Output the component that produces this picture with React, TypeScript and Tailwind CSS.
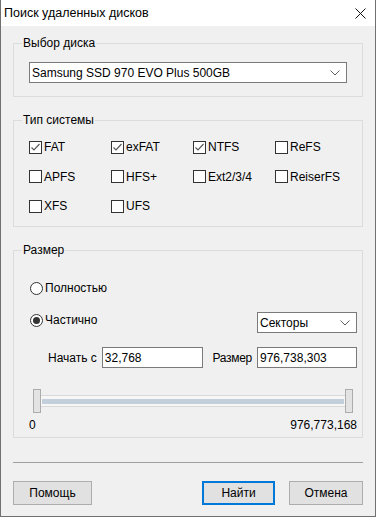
import React from 'react'

const Chevron = () => (
  <svg width="10" height="6" viewBox="0 0 10 6" className="shrink-0">
    <polyline points="0.5,0.5 5,5 9.5,0.5" fill="none" stroke="#606060" strokeWidth="1" />
  </svg>
)

function Checkbox({ label, checked }: { label: string; checked?: boolean }) {
  return (
    <div className="flex items-center gap-[2px] h-[20px]">
      <div className="w-[13px] h-[13px] border border-[#333333] bg-white flex items-center justify-center shrink-0">
        {checked && (
          <svg width="11" height="11" viewBox="0 0 11 11">
            <polyline points="1.5,5.5 4,8 9.5,2" fill="none" stroke="#5a5a5a" strokeWidth="1.2" />
          </svg>
        )}
      </div>
      <span>{label}</span>
    </div>
  )
}

function Radio({ label, checked }: { label: string; checked?: boolean }) {
  return (
    <div className="flex items-center gap-[2px] h-[14px]">
      <div className="w-[13px] h-[13px] rounded-full border border-[#333333] bg-white flex items-center justify-center shrink-0">
        {checked && <div className="w-[7px] h-[7px] rounded-full bg-[#333333]" />}
      </div>
      <span>{label}</span>
    </div>
  )
}

function Group({ title, children, className, inner }: { title: string; children: React.ReactNode; className?: string; inner?: string }) {
  return (
    <fieldset className={`min-w-0 border border-[#dcdcdc] ${className ?? ''}`}>
      <legend className="ml-[8px] px-[1px] leading-[14px]">{title}</legend>
      <div className={inner}>{children}</div>
    </fieldset>
  )
}

const fsList: [string, boolean][] = [
  ['FAT', true], ['exFAT', true], ['NTFS', true], ['ReFS', false],
  ['APFS', false], ['HFS+', false], ['Ext2/3/4', false], ['ReiserFS', false],
  ['XFS', false], ['UFS', false],
]

export default function App() {
  return (
    <div className="w-[376px] h-[517px] bg-[#f0f0f0] border-x border-b border-[#707070] text-[12px] leading-[14px] text-black font-['Liberation_Sans',Arial,sans-serif] overflow-hidden">
      {/* title bar */}
      <div className="h-[26px] bg-white flex items-center justify-between pl-[3px] pr-[9px]">
        <span className="text-[12.5px]">Поиск удаленных дисков</span>
        <svg width="11" height="11" viewBox="0 0 11 11">
          <path d="M0.5 0.5 L10.5 10.5 M10.5 0.5 L0.5 10.5" stroke="#111" strokeWidth="1" />
        </svg>
      </div>

      <div className="px-[12px] pt-[10px]">
        {/* disk */}
        <Group title="Выбор диска" inner="px-[15px] pb-[13px]">
          <div className="mt-[12px] h-[21px] border border-[#7a7a7a] bg-white flex items-center justify-between pl-[2px] pr-[6px]">
            <span>Samsung SSD 970 EVO Plus 500GB</span>
            <Chevron />
          </div>
        </Group>

        {/* fs types */}
        <Group title="Тип системы" className="mt-[16px]" inner="pl-[15px] pb-[10px]">
          <div className="mt-[10px] grid grid-cols-[82px_82px_82px_82px] gap-y-[9.5px]">
            {fsList.map(([name, checked]) => (
              <Checkbox key={name} label={name} checked={checked} />
            ))}
          </div>
        </Group>

        {/* size */}
        <Group title="Размер" className="mt-[16px]" inner="pl-[15px] pr-[5px] pb-[5px]">
          <div className="pt-[24px] pl-[1px]">
            <Radio label="Полностью" />
          </div>
          <div className="mt-[17px] flex items-start justify-between">
            <div className="pl-[1px] pt-[1px]">
              <Radio label="Частично" checked />
            </div>
            <div className="w-[100px] h-[21px] border border-[#7a7a7a] bg-white flex items-center justify-between pl-[2px] pr-[6px]">
              <span>Секторы</span>
              <Chevron />
            </div>
          </div>
          <div className="mt-[14px] flex items-center whitespace-nowrap">
            <span className="ml-[19px] shrink-0">Начать с</span>
            <div className="ml-[5px] w-[101px] shrink-0 h-[21px] border border-[#7a7a7a] bg-white flex items-center pl-[2px]">32,768</div>
            <span className="ml-auto shrink-0 tracking-[-0.3px]">Размер</span>
            <div className="ml-[5px] w-[100px] shrink-0 h-[21px] border border-[#7a7a7a] bg-white flex items-center pl-[2px]">976,738,303</div>
          </div>

          {/* slider */}
          <div className="mt-[21px] flex items-center pl-[4px] pr-[4px] h-[24px]">
            <div className="w-[8px] h-[24px] bg-[#e3e3e3] border border-[#acacac] shrink-0" />
            <div className="flex-1 h-[12px] border-y border-[#d9d9d9] bg-[#f7f7f7] flex items-center px-[1px]">
              <div className="h-[5px] w-full bg-[#c3d0db]" />
            </div>
            <div className="w-[8px] h-[24px] bg-[#e3e3e3] border border-[#acacac] shrink-0" />
          </div>
          <div className="mt-[5px] flex justify-between">
            <span>0</span>
            <span>976,773,168</span>
          </div>
        </Group>

        <div className="mt-[24px] h-px bg-[#a0a0a0]" />

        <div className="mt-[18px] flex items-center">
          <button className="w-[79px] h-[24px] bg-[#e1e1e1] border border-[#adadad]">Помощь</button>
          <button className="ml-auto w-[73px] h-[24px] bg-[#e1e1e1] border-2 border-[#0078d7]">Найти</button>
          <button className="ml-[14px] w-[74px] h-[24px] bg-[#e1e1e1] border border-[#adadad]">Отмена</button>
        </div>
      </div>
    </div>
  )
}
